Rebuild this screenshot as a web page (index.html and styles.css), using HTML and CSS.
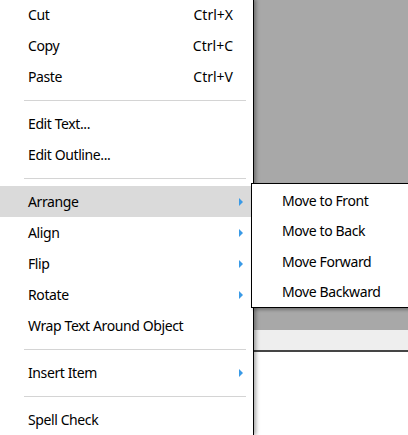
FILE: index.html
```html
<!DOCTYPE html>
<html>
<head>
<meta charset="utf-8">
<link rel="stylesheet" href="styles.css">
</head>
<body>
<div class="screen">
  <div class="menu">
    <div class="item"><span class="label">Cut</span><span class="key">Ctrl+X</span><span class="sub"></span></div>
    <div class="item"><span class="label">Copy</span><span class="key">Ctrl+C</span><span class="sub"></span></div>
    <div class="item"><span class="label">Paste</span><span class="key">Ctrl+V</span><span class="sub"></span></div>
    <div class="sep"></div>
    <div class="item"><span class="label">Edit Text...</span><span class="sub"></span></div>
    <div class="item"><span class="label">Edit Outline...</span><span class="sub"></span></div>
    <div class="sep"></div>
    <div class="item active"><span class="label">Arrange</span><span class="sub"><i class="arrow"></i></span></div>
    <div class="item"><span class="label">Align</span><span class="sub"><i class="arrow"></i></span></div>
    <div class="item"><span class="label">Flip</span><span class="sub"><i class="arrow"></i></span></div>
    <div class="item"><span class="label">Rotate</span><span class="sub"><i class="arrow"></i></span></div>
    <div class="item"><span class="label">Wrap Text Around Object</span><span class="sub"></span></div>
    <div class="sep"></div>
    <div class="item"><span class="label">Insert Item</span><span class="sub"><i class="arrow"></i></span></div>
    <div class="sep"></div>
    <div class="item"><span class="label">Spell Check</span><span class="sub"></span></div>
  </div>
  <div class="canvas">
    <div class="gray"></div>
    <div class="bar"></div>
    <div class="rule"></div>
    <div class="page"></div>
  </div>
  <div class="submenu">
    <div class="subitem">Move to Front</div>
    <div class="subitem">Move to Back</div>
    <div class="subitem">Move Forward</div>
    <div class="subitem">Move Backward</div>
  </div>
</div>
</body>
</html>
```
FILE: styles.css
```css
html, body {
  margin: 0;
  padding: 0;
  background: #ffffff;
}
body {
  font-family: "Noto Sans", "Open Sans", sans-serif;
  font-size: 14px;
  letter-spacing: -0.4px;
  color: #000;
}
.screen {
  position: relative;
  width: 408px;
  height: 435px;
  overflow: hidden;
  display: flex;
}
.menu {
  position: relative;
  z-index: 2;
  width: 253px;
  flex: none;
  margin-top: -1px;
  background: #ffffff;
  border-right: 1px solid #000;
  box-shadow: 2px 0 4px rgba(0,0,0,0.35);
  height: 436px;
}
.item {
  height: 31px;
  display: flex;
  align-items: center;
  padding-left: 28px;
}
.item.active {
  background: #dadada;
}
.label {
  flex: 1;
  white-space: nowrap;
}
.key {
  white-space: nowrap;
  letter-spacing: 0;
}
.sub {
  width: 20px;
  flex: none;
  display: flex;
  align-items: center;
  padding-left: 6px;
  box-sizing: border-box;
}
.arrow {
  display: block;
  width: 0;
  height: 0;
  border-left: 4px solid #3a9ae6;
  border-top: 4px solid transparent;
  border-bottom: 4px solid transparent;
}
.sep {
  height: 16px;
  display: flex;
  align-items: flex-start;
  padding-top: 8px;
  box-sizing: border-box;
  margin: 0 7px 0 24px;
}
.sep::before {
  content: "";
  display: block;
  width: 100%;
  height: 1px;
  background: #d4d4d4;
}
.canvas {
  flex: 1;
  display: flex;
  flex-direction: column;
}
.gray {
  height: 330px;
  background: #a8a8a8;
}
.bar {
  height: 20px;
  background: #eeeeee;
}
.rule {
  height: 2px;
  background: #454545;
}
.page {
  flex: 1;
  background: #ffffff;
}
.submenu {
  position: absolute;
  z-index: 3;
  left: 251px;
  top: 183px;
  width: 200px;
  height: 122px;
  padding-top: 1px;
  background: #ffffff;
  border: 1px solid #000;
  box-shadow: 2px 2px 3px rgba(0,0,0,0.3);
}
.subitem {
  height: 30.5px;
  display: flex;
  align-items: center;
  padding-left: 30px;
  white-space: nowrap;
}
```
